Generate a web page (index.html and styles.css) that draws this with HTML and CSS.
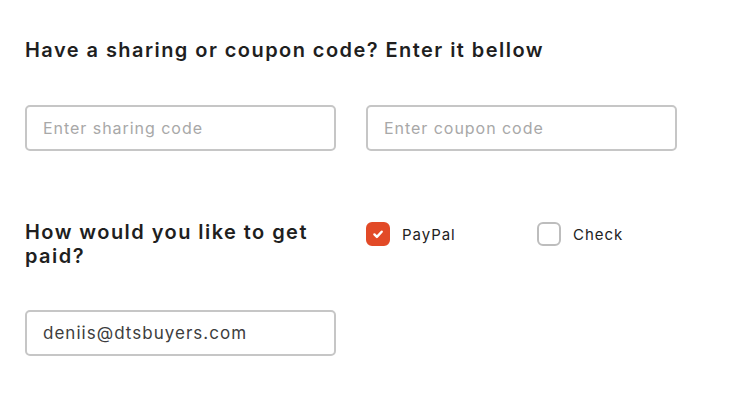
FILE: index.html
```html
<!DOCTYPE html>
<html>
<head>
<meta charset="utf-8">
<link rel="stylesheet" href="styles.css">
</head>
<body>
<main class="form">
  <h2 class="title">Have a sharing or coupon code? Enter it bellow</h2>
  <div class="row codes">
    <input class="field" type="text" placeholder="Enter sharing code">
    <input class="field" type="text" placeholder="Enter coupon code">
  </div>
  <div class="row payout">
    <h2 class="title title-wrap">How would you like to get paid?</h2>
    <div class="options">
      <label class="option">
        <span class="box checked">
          <svg viewBox="0 0 24 24" width="24" height="24"><path d="M8.4 12.4l2.5 2.5 4.8-5.2" fill="none" stroke="#fff" stroke-width="2.4" stroke-linecap="round" stroke-linejoin="round"/></svg>
        </span>
        <span class="option-label">PayPal</span>
      </label>
      <label class="option">
        <span class="box"></span>
        <span class="option-label">Check</span>
      </label>
    </div>
  </div>
  <div class="row email">
    <input class="field filled" type="text" value="deniis@dtsbuyers.com">
  </div>
</main>
</body>
</html>
```

FILE: styles.css
```css
html, body {
  margin: 0;
  padding: 0;
  background: #ffffff;
}
body {
  font-family: Inter, "Noto Sans", sans-serif;
  color: #1c1c1c;
  letter-spacing: 0.06em;
}
.form {
  padding: 36px 25px 0 25px;
  width: 652px;
}
.title {
  margin: 0;
  font-size: 20px;
  line-height: 28px;
  font-weight: 600;
  letter-spacing: 0.072em;
  color: #1f1f1f;
}
.row {
  display: grid;
  grid-template-columns: 311px 311px;
  column-gap: 30px;
}
.codes {
  margin-top: 41px;
}
.field {
  box-sizing: border-box;
  width: 311px;
  height: 46px;
  border: 2px solid #c6c6c6;
  border-radius: 5px;
  padding: 0 16px;
  font-family: Inter, "Noto Sans", sans-serif;
  font-size: 16px;
  letter-spacing: 0.06em;
  color: #3a3a3a;
  background: #fff;
  outline: none;
}
.field::placeholder {
  color: #a8a8a8;
}
.payout {
  margin-top: 69px;
  align-items: start;
}
.title-wrap {
  line-height: 24px;
  padding-top: 0;
}
.options {
  display: grid;
  grid-template-columns: 171px 140px;
  padding-top: 2px;
}
.option {
  display: flex;
  align-items: center;
  gap: 12px;
}
.box {
  box-sizing: border-box;
  width: 24px;
  height: 24px;
  border: 2px solid #bdbdbd;
  border-radius: 6px;
  display: flex;
  align-items: center;
  justify-content: center;
}
.box.checked {
  background: #e24a27;
  border-color: #e24a27;
}
.box svg {
  display: block;
  flex: none;
}
.option-label {
  font-size: 15px;
  color: #222;
}
.email {
  margin-top: 42px;
}
.filled {
  font-size: 17px;
  color: #3d3d3d;
}
```
